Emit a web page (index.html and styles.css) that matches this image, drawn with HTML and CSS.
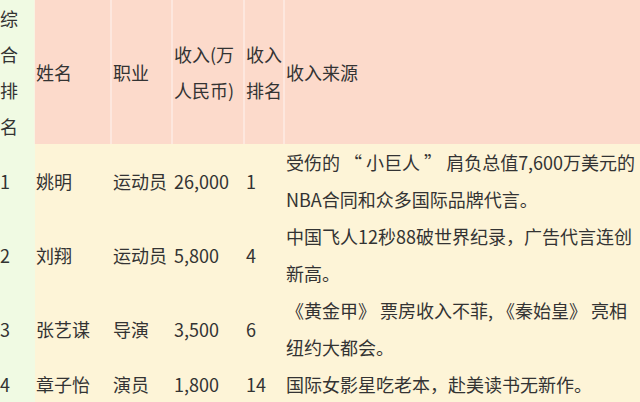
FILE: index.html
```html
<!DOCTYPE html>
<html lang="zh-CN">
<head>
<meta charset="utf-8">
<title>收入排名</title>
<link rel="stylesheet" href="styles.css">
</head>
<body>
<table class="rank">
  <colgroup>
    <col class="c1"><col class="c2"><col class="c3"><col class="c4"><col class="c5"><col class="c6">
  </colgroup>
  <thead>
    <tr>
      <th class="first">综合排名</th>
      <th>姓名</th>
      <th>职业</th>
      <th>收入(万人民币)</th>
      <th>收入排名</th>
      <th class="last">收入来源</th>
    </tr>
  </thead>
  <tbody>
    <tr>
      <td class="first">1</td>
      <td>姚明</td>
      <td>运动员</td>
      <td>26,000</td>
      <td>1</td>
      <td>受伤的 “ 小巨人 ” 肩负总值7,600万美元的NBA合同和众多国际品牌代言。</td>
    </tr>
    <tr>
      <td class="first">2</td>
      <td>刘翔</td>
      <td>运动员</td>
      <td>5,800</td>
      <td>4</td>
      <td>中国飞人12秒88破世界纪录，广告代言连创新高。</td>
    </tr>
    <tr>
      <td class="first">3</td>
      <td>张艺谋</td>
      <td>导演</td>
      <td>3,500</td>
      <td>6</td>
      <td>《黄金甲》 票房收入不菲, 《秦始皇》 亮相纽约大都会。</td>
    </tr>
    <tr>
      <td class="first">4</td>
      <td>章子怡</td>
      <td>演员</td>
      <td>1,800</td>
      <td>14</td>
      <td>国际女影星吃老本，赴美读书无新作。</td>
    </tr>
  </tbody>
</table>
</body>
</html>
```

FILE: styles.css
```css
html, body {
  margin: 0;
  padding: 0;
  background: #fdf4d7;
}
body {
  font-family: "Noto Sans CJK SC", "Noto Sans", sans-serif;
  font-size: 18px;
  color: #333333;
  overflow: hidden;
}
.rank {
  width: 640px;
  table-layout: fixed;
  border-collapse: separate;
  border-spacing: 0;
}
.c1 { width: 35px; }
.c2 { width: 77px; }
.c3 { width: 61px; }
.c4 { width: 72px; }
.c5 { width: 40px; }
.c6 { width: 355px; }

.rank th,
.rank td {
  padding: 0 0 0 1px;
  text-align: left;
  vertical-align: middle;
  font-weight: normal;
  word-break: break-all;
}
.rank th {
  background: #fcdacb;
  line-height: 36px;
  border-right: 2px solid #fde7de;
}
.rank th.last {
  border-right: 0;
}
.rank td {
  background: #fdf4d7;
  line-height: 37px;
}
.rank .first {
  background: #f0fae3;
  padding-left: 0;
  border-right: 0;
}
.rank th.first {
  border-right: 1px solid #f7f3e2;
}
```
